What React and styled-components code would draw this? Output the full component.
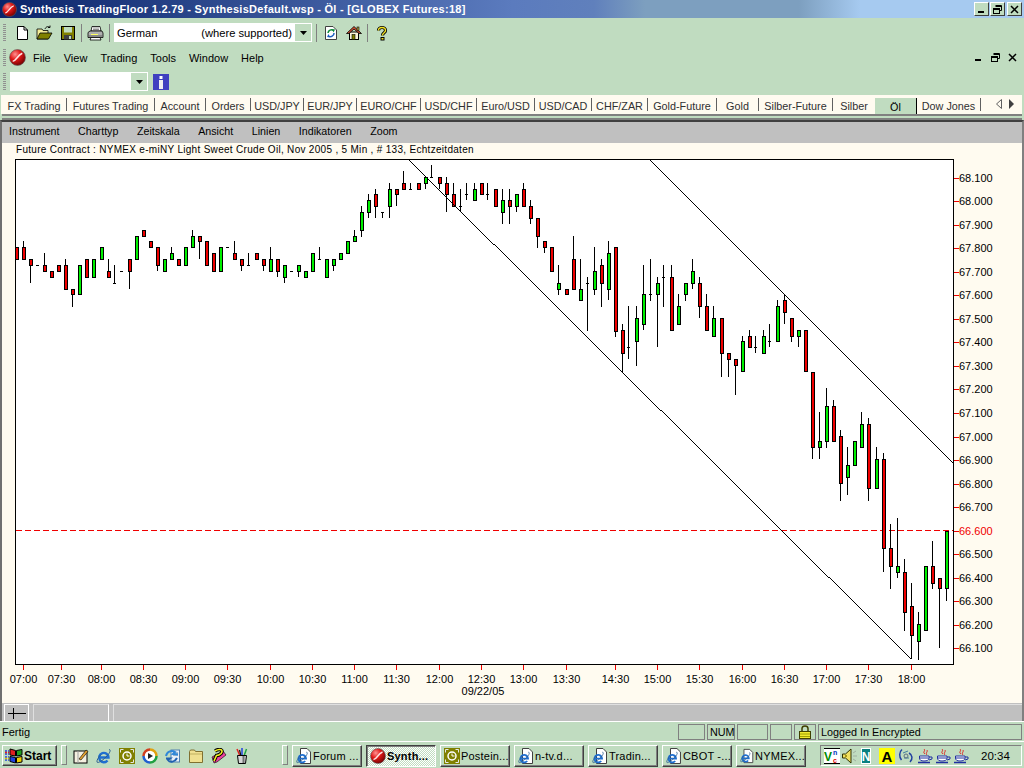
import React from "react";
import styled, { createGlobalStyle } from "styled-components";

const GREEN = "#c0dcc0";
const CREAM = "#fffbf0";
const GRAY = "#c0c0c0";

const TABS = [
  { label: "FX Trading", w: 65 },
  { label: "Futures Trading", w: 88 },
  { label: "Account", w: 51 },
  { label: "Orders", w: 45 },
  { label: "USD/JPY", w: 53 },
  { label: "EUR/JPY", w: 53 },
  { label: "EURO/CHF", w: 64 },
  { label: "USD/CHF", w: 56 },
  { label: "Euro/USD", w: 58 },
  { label: "USD/CAD", w: 57 },
  { label: "CHF/ZAR", w: 56 },
  { label: "Gold-Future", w: 69 },
  { label: "Gold", w: 42 },
  { label: "Silber-Future", w: 74 },
  { label: "Silber", w: 42, plain: true },
  { label: "Öl", w: 42, active: true },
  { label: "Dow Jones", w: 64 },
];

const Y_LABELS = [
  ["68.100", 178], ["68.000", 201], ["67.900", 225], ["67.800", 248], ["67.700", 272],
  ["67.600", 295], ["67.500", 319], ["67.400", 342], ["67.300", 366], ["67.200", 389],
  ["67.100", 413], ["67.000", 437], ["66.900", 460], ["66.800", 484], ["66.700", 507],
  ["66.600", 531], ["66.500", 554], ["66.400", 578], ["66.300", 601], ["66.200", 625],
  ["66.100", 648],
];

const X_LABELS = [
  ["07:00", 23], ["07:30", 61], ["08:00", 101], ["08:30", 143], ["09:00", 185], ["09:30", 227],
  ["10:00", 270], ["10:30", 312], ["11:00", 354], ["11:30", 396], ["12:00", 439], ["12:30", 481],
  ["13:00", 523], ["13:30", 566], ["14:30", 615], ["15:00", 657], ["15:30", 699], ["16:00", 742],
  ["16:30", 784], ["17:00", 826], ["17:30", 868], ["18:00", 911],
];

// candles read off the zoomed reference: [kind, x, bodyTop, bodyBottom, wickTop, wickBottom]
const seg = (ox, oy, rows) =>
  rows.map(([kind, x, top, bottom, wickTop, wickBottom]) => ({
    kind,
    x: Math.round(ox + x / 3),
    top: Math.round(oy + top / 3),
    bottom: Math.round(oy + bottom / 3),
    wickTop: Math.round(oy + (wickTop ?? top) / 3),
    wickBottom: Math.round(oy + (wickBottom ?? bottom) / 3),
  }));

const CANDLES = [
  ...seg(0, 160, [
    ["r", 51, 262, 298], ["r", 72, 262, 298, 243], ["r", 93, 298, 316, 298, 370], ["d", 113, 316, 316],
    ["r", 134, 316, 334, 280], ["r", 156, 334, 352], ["r", 177, 316, 334], ["r", 198, 316, 388, 298],
    ["r", 219, 388, 403, 388, 440], ["g", 240, 316, 403], ["r", 261, 298, 352], ["g", 282, 298, 352],
    ["g", 306, 262, 298], ["r", 327, 334, 352, 298], ["d", 346, 370, 370, 316], ["d", 367, 334, 334],
    ["r", 390, 298, 334, 298, 388], ["g", 411, 229, 298], ["r", 432, 211, 229], ["r", 453, 244, 262],
    ["r", 474, 262, 316, 262, 334], ["g", 495, 298, 334], ["g", 516, 280, 298, 262], ["r", 537, 298, 316],
    ["g", 558, 262, 316], ["g", 579, 229, 262, 211], ["r", 600, 229, 244, 229, 298], ["r", 621, 244, 316],
    ["r", 642, 280, 334], ["g", 663, 262, 334], ["d", 684, 262, 262], ["r", 705, 280, 298, 243],
    ["r", 726, 298, 316, 298, 334], ["d", 746, 316, 316, 280], ["r", 771, 280, 298],
    ["r", 792, 298, 316, 298, 334], ["g", 813, 298, 334, 262], ["r", 834, 298, 334, 298, 352],
    ["g", 855, 316, 352, 316, 370], ["d", 875, 334, 334], ["g", 897, 316, 334, 316, 352], ["g", 918, 334, 352],
    ["g", 939, 280, 334], ["d", 960, 298, 298, 262], ["g", 981, 298, 352], ["g", 1002, 298, 316, 298, 334],
  ]),
  ...seg(340, 160, [
    ["g", 2, 280, 298], ["g", 23, 244, 280], ["g", 44, 229, 244, 211], ["g", 65, 157, 211, 139, 230],
    ["g", 87, 121, 157, 102, 175], ["r", 108, 103, 139, 87, 175], ["d", 128, 157, 157, 157, 175],
    ["g", 149, 88, 139, 70, 175], ["r", 171, 88, 103, 88, 139], ["r", 192, 70, 88, 34], ["d", 214, 88, 88, 70],
    ["r", 236, 70, 88], ["g", 258, 52, 70, 52, 88], ["d", 277, 52, 52, 16], ["r", 300, 52, 70, 52, 88],
    ["r", 320, 70, 103, 52, 157], ["r", 341, 103, 139, 70], ["d", 362, 139, 139, 88, 157],
    ["d", 382, 103, 103, 70, 121], ["g", 404, 88, 121, 70], ["r", 426, 70, 103], ["d", 445, 103, 103, 70, 121],
    ["r", 468, 88, 139], ["g", 489, 121, 157, 88, 193], ["r", 510, 121, 139, 88, 193],
    ["g", 531, 103, 139, 103, 157], ["r", 552, 88, 139, 70], ["r", 573, 139, 175, 121, 193],
    ["r", 594, 175, 229, 175, 263], ["r", 615, 244, 262, 244, 280], ["r", 636, 262, 334],
    ["g", 657, 370, 388, 316, 404], ["r", 681, 388, 403], ["r", 702, 298, 388, 229],
    ["g", 723, 388, 421, 298], ["d", 744, 370, 370, 352, 512], ["g", 765, 334, 388, 262, 404],
    ["r", 786, 316, 370, 298, 440], ["g", 807, 280, 388, 244, 421], ["r", 828, 262, 512, 262, 530],
  ]),
  ...seg(600, 230, [
    ["r", 69, 301, 370, 282, 428], ["d", 88, 352, 352, 229, 388], ["g", 110, 265, 334, 229, 407],
    ["g", 131, 193, 283, 106, 301], ["d", 152, 193, 193, 88, 212], ["g", 174, 160, 193, 142, 352],
    ["d", 193, 142, 142, 106, 230], ["r", 216, 142, 301, 106], ["g", 237, 229, 283, 193],
    ["g", 258, 160, 193, 160, 212], ["g", 279, 124, 160, 88, 178], ["r", 300, 160, 229, 142, 265],
    ["r", 321, 229, 301, 193], ["g", 342, 265, 319, 229], ["r", 366, 265, 370, 265, 442],
    ["r", 387, 370, 388, 370, 442], ["r", 408, 388, 406, 388, 494], ["g", 429, 334, 424, 319],
    ["r", 450, 319, 352, 301], ["d", 469, 352, 352, 319, 370], ["g", 492, 319, 370, 301],
    ["d", 511, 334, 334, 283, 352], ["g", 534, 229, 334, 211], ["r", 555, 211, 247, 193, 283],
    ["r", 576, 265, 319, 265, 335], ["g", 597, 301, 319, 301, 352], ["r", 618, 301, 424],
  ]),
  ...seg(800, 320, [
    ["r", 39, 155, 382, 155, 418], ["g", 59, 364, 382, 277, 418], ["g", 80, 259, 364, 205, 383],
    ["r", 101, 259, 364, 241], ["r", 122, 349, 490, 331, 542], ["g", 143, 436, 472, 382, 524],
    ["g", 164, 364, 436], ["g", 185, 313, 382, 277], ["r", 206, 313, 505, 295, 542], ["g", 230, 418, 505, 382],
  ]),
  ...seg(860, 500, [
    ["r", 71, -122, 143, -140, 215], ["r", 92, 143, 197, 72, 266], ["g", 113, 197, 215, 54, 233],
    ["r", 134, 215, 337, 178, 392], ["r", 155, 319, 406, 250, 478], ["g", 176, 373, 424, 337, 480],
    ["g", 197, 197, 391], ["r", 218, 197, 250, 124, 266], ["r", 239, 233, 265, 233, 443],
    ["g", 260, 92, 265, 92, 302],
  ]),
];

const Svg = ({ size = 16, children }) => (
  <svg width={size} height={size} viewBox="0 0 16 16">
    {children}
  </svg>
);

const LogoBall = ({ size = 16 }) => (
  <Svg size={size}>
    <defs>
      <radialGradient id="ball" cx="35%" cy="30%" r="75%">
        <stop offset="0" stopColor="#ff9090" />
        <stop offset="0.45" stopColor="#e01818" />
        <stop offset="1" stopColor="#700000" />
      </radialGradient>
    </defs>
    <circle cx="8" cy="8" r="7.5" fill="url(#ball)" stroke="#606060" strokeWidth="0.6" />
    <path d="M3.5 11.5C7 11.5 7.5 6 12.5 4" fill="none" stroke="#ffe4e4" strokeWidth="1.4" />
  </Svg>
);

const NewIcon = () => (
  <Svg>
    <path d="M3.5 1.5H10L13.5 5V14.5H3.5Z" fill="#fff" stroke="#000" />
    <path d="M10 1.5V5H13.5" fill="none" stroke="#000" />
  </Svg>
);

const OpenIcon = () => (
  <svg width="17" height="16" viewBox="0 0 17 16">
    <path d="M1 4H6L7 5.5H12V14H1Z" fill="#f4ec98" stroke="#000" strokeWidth="0.8" />
    <path d="M1 14L4 8H16L12.5 14Z" fill="#808000" stroke="#000" strokeWidth="0.8" />
    <path d="M9 4C10 1.5 12 1 14 2.5M14 2.5V0.5M14 2.5H12" fill="none" stroke="#000" strokeWidth="0.9" />
  </svg>
);

const SaveIcon = () => (
  <Svg>
    <rect x="1.5" y="1.5" width="13" height="13" fill="#808000" stroke="#000" />
    <rect x="4" y="2" width="8" height="5.5" fill={GREEN} />
    <rect x="4" y="10" width="8" height="4.5" fill="#404040" />
    <rect x="9" y="11" width="2" height="3" fill={GREEN} />
  </Svg>
);

const PrintIcon = () => (
  <svg width="17" height="16" viewBox="0 0 17 16">
    <path d="M5 1.5H13L14 6H4Z" fill="#fff" stroke="#000" strokeWidth="0.8" />
    <path d="M6 3H12M6 4.5H12" stroke="#606060" strokeWidth="0.7" />
    <path d="M1 7.5L3 6H15L16 8V12.5H1Z" fill="#b0b0b0" stroke="#000" strokeWidth="0.8" />
    <path d="M4 9.5H11" stroke="#ffff60" />
    <path d="M1 11H16" stroke="#606060" />
    <path d="M4 12.5H13L14 15H3Z" fill="#fff" stroke="#000" strokeWidth="0.8" />
  </svg>
);

const RefreshIcon = () => (
  <Svg>
    <path d="M2.5 1.5H10L13.5 5V14.5H2.5Z" fill="#fff" stroke="#404040" />
    <path d="M5 8A3.5 3.5 0 0 1 10.5 5.5" fill="none" stroke="#0a8a3a" strokeWidth="1.5" />
    <path d="M11 8A3.5 3.5 0 0 1 5.5 11" fill="none" stroke="#1c5fc0" strokeWidth="1.5" />
    <path d="M9 4L12 4.5L10.5 7.5Z" fill="#0a8a3a" />
    <path d="M7 12.5L4 12L5.5 9Z" fill="#1c5fc0" />
  </Svg>
);

const HomeIcon = () => (
  <Svg>
    <rect x="3.5" y="7" width="9" height="7.5" fill="#fbf6d8" stroke="#000" />
    <path d="M0.5 8.5L8 1.5L15.5 8.5L13 8.5L8 4L3 8.5Z" fill="#d05030" stroke="#000" strokeWidth="0.8" />
    <rect x="11" y="2" width="2" height="3.5" fill="#b0a040" stroke="#000" strokeWidth="0.6" />
    <rect x="6" y="9.5" width="3" height="5" fill="#808000" stroke="#000" strokeWidth="0.6" />
  </Svg>
);

const HelpIcon = () => (
  <Svg>
    <path d="M4.5 5.5C4.5 1.5 11.5 1.5 11.5 5.5C11.5 8 8.5 7.5 8.5 10.5" fill="none" stroke="#000" strokeWidth="3.2" />
    <rect x="6.5" y="12" width="4" height="3.5" fill="#000" />
    <path d="M4.5 5.5C4.5 1.5 11.5 1.5 11.5 5.5C11.5 8 8.5 7.5 8.5 10.5" fill="none" stroke="#f0e020" strokeWidth="1.4" />
    <rect x="7.5" y="13" width="2" height="1.5" fill="#f0e020" />
  </Svg>
);

const InfoIcon = () => (
  <Svg>
    <rect width="16" height="16" fill="#4040c0" />
    <rect x="6.5" y="2" width="3" height="3" fill="#fff" />
    <rect x="6" y="6" width="4" height="9" fill="#f0f0f0" />
  </Svg>
);

const MinGlyph = () => (
  <svg width="9" height="9" viewBox="0 0 9 9">
    <rect x="1" y="6" width="6" height="2" fill="#000" />
  </svg>
);

const RestoreGlyph = () => (
  <svg width="9" height="9" viewBox="0 0 9 9">
    <path d="M2.5 0.5H8.5V5.5H6.5" fill="none" stroke="#000" />
    <path d="M2.5 1.5H8.5" stroke="#000" />
    <rect x="0.5" y="3.5" width="6" height="5" fill="none" stroke="#000" />
    <path d="M0.5 4.5H6.5" stroke="#000" />
  </svg>
);

const CloseGlyph = () => (
  <svg width="9" height="9" viewBox="0 0 9 9">
    <path d="M1 1L8 8M8 1L1 8" stroke="#000" strokeWidth="1.5" />
  </svg>
);

const ArrowDown = () => (
  <svg width="7" height="4" viewBox="0 0 7 4">
    <path d="M0 0H7L3.5 4Z" fill="#000" />
  </svg>
);

const ScrollArrows = () => (
  <svg width="20" height="10" viewBox="0 0 20 10">
    <path d="M5.5 0.5V9.5L0.5 5Z" fill="none" stroke="#606060" />
    <path d="M13 0V10L18 5Z" fill="#404040" />
  </svg>
);

const WinFlag = () => (
  <svg width="19" height="16" viewBox="0 0 19 16">
    <path d="M6 1L11.5 2.5V8L6 7Z" fill="#e02020" stroke="#000" />
    <path d="M12.5 2.5L18 1.5V7L12.5 8Z" fill="#20a020" stroke="#000" />
    <path d="M6 8.5L11.5 9.5V15L6 13.5Z" fill="#2040e0" stroke="#000" />
    <path d="M12.5 9.5L18 8.5V14L12.5 15Z" fill="#f0d000" stroke="#000" />
    <path d="M1 3H5M1 6H5M1 9H5M1 12H5" stroke="#2040e0" strokeWidth="1.5" strokeDasharray="2 1" />
    <path d="M1 4.5H5" stroke="#e02020" strokeWidth="1.5" strokeDasharray="2 1" />
    <path d="M1 10.5H5" stroke="#e0c000" strokeWidth="1.5" strokeDasharray="2 1" />
  </svg>
);

const IeIcon = () => (
  <Svg>
    <path d="M3.5 9.5H12.5A4.7 4.7 0 1 0 11.5 12.5" fill="none" stroke="#1f6fd0" strokeWidth="2.4" />
    <path d="M13 1.5C15 1.5 14.5 4.5 10 9C5.5 13.5 1.5 15.5 1 14C0.5 12.5 2.5 9 5 6.5" fill="none" stroke="#2c5f90" strokeWidth="1" />
  </Svg>
);

const DocIe = () => (
  <Svg>
    <path d="M4.5 0.5H11L14.5 4V15.5H4.5Z" fill="#fff" stroke="#404040" />
    <g transform="translate(0 3) scale(0.8)">
      <IeIcon />
    </g>
  </Svg>
);

const OliveClock = () => (
  <Svg>
    <rect width="16" height="16" fill="#808000" />
    <circle cx="8" cy="8" r="4" fill="none" stroke="#fff" strokeWidth="1.5" />
    <path d="M8 5.5V8H10.5" fill="none" stroke="#fff" />
    <path d="M1.5 4.5V1.5H4.5M11.5 1.5H14.5V4.5M14.5 11.5V14.5H11.5M4.5 14.5H1.5V11.5" fill="none" stroke="#e8e8e8" />
  </Svg>
);

const ShowDesktop = () => (
  <Svg>
    <rect x="1" y="3" width="13" height="12" fill="#f4f0e0" stroke="#000" />
    <path d="M5 3L5 15" stroke="#a0a0a0" />
    <path d="M6 11L13 2L15 3.5L8 12Z" fill="#e0a030" stroke="#000" strokeWidth="0.6" />
  </Svg>
);

const MediaIcon = () => (
  <Svg>
    <circle cx="8" cy="8" r="6" fill="#fff" />
    <path d="M8 1.5A6.5 6.5 0 0 1 14.5 8" fill="none" stroke="#e0a010" strokeWidth="2.5" />
    <path d="M14.5 8A6.5 6.5 0 0 1 8 14.5" fill="none" stroke="#20a040" strokeWidth="2.5" />
    <path d="M8 14.5A6.5 6.5 0 0 1 1.5 8" fill="none" stroke="#2060d0" strokeWidth="2.5" />
    <path d="M1.5 8A6.5 6.5 0 0 1 8 1.5" fill="none" stroke="#d04020" strokeWidth="2.5" />
    <path d="M6 5V11L11 8Z" fill="#202020" />
  </Svg>
);

const MailIcon = () => (
  <Svg>
    <rect x="6" y="2" width="8.5" height="12" fill="#e8f0f8" stroke="#5080b0" />
    <path d="M8 5H13M8 7H13" stroke="#5080b0" />
    <path d="M1 8C2 3 7 2 10 4L8 6L13 6.5" fill="none" stroke="#3088d8" strokeWidth="2" />
    <path d="M12 10C10 14 5 15 3 12L5 10.5H1" fill="none" stroke="#2060b0" strokeWidth="2" />
  </Svg>
);

const FolderIcon = () => (
  <Svg>
    <path d="M1.5 3.5L2.5 2H6.5L7.5 3.5H14.5V14.5H1.5Z" fill="#f0e090" stroke="#807030" />
    <path d="M2 6H14" stroke="#c0b060" />
  </Svg>
);

const PaintIcon = () => (
  <Svg>
    <path d="M1 9L12 3L15 7L6 14L3 15Z" fill="#f040a0" stroke="#000" strokeWidth="0.6" />
    <path d="M4 3C9 0 13 2 10 5.5C8.5 7 6.5 7.5 5.5 7.5L3 13" fill="none" stroke="#000" strokeWidth="3.5" />
    <path d="M4 3C9 0 13 2 10 5.5C8.5 7 6.5 7.5 5.5 7.5L3 13" fill="none" stroke="#f8f020" strokeWidth="1.6" />
  </Svg>
);

const PencilCup = () => (
  <Svg>
    <path d="M3 1L6 8" stroke="#e02020" strokeWidth="1.5" />
    <path d="M8 0V8" stroke="#2040e0" strokeWidth="1.5" />
    <path d="M12.5 1L10 8" stroke="#20a040" strokeWidth="1.5" />
    <path d="M5.5 2L7 8" stroke="#101010" strokeWidth="1.2" />
    <path d="M3.5 7.5H12.5L11.5 15.5H4.5Z" fill="#d8d8d8" stroke="#000" />
    <path d="M9.5 8V15" stroke="#707070" strokeWidth="2" />
  </Svg>
);

const LockIcon = () => (
  <Svg>
    <path d="M5 7.5V4.5C5 1 11 1 11 4.5V7.5" fill="none" stroke="#404000" strokeWidth="1.5" />
    <rect x="2.5" y="7.5" width="11" height="7" fill="#f0e830" stroke="#404000" />
    <path d="M3 10H13M3 12.5H13" stroke="#a0a000" />
  </Svg>
);

const VncIcon = () => (
  <Svg>
    <rect width="16" height="16" fill="#fff" />
    <rect y="15" width="16" height="1" fill="#000" />
    <rect width="16" height="1" fill="#000" />
    <VncLetter x="0" y="13" fontSize="12" fill="#008a00">V</VncLetter>
    <VncLetter x="9" y="6.5" fontSize="7" fill="#0030c0">n</VncLetter>
    <VncLetter x="9" y="14.5" fontSize="7" fill="#e00000">c</VncLetter>
  </Svg>
);

const SpeakerIcon = () => (
  <Svg>
    <path d="M0.5 6H3.5L9 1V15L3.5 10H0.5Z" fill="#f0e060" stroke="#303000" />
    <path d="M4 7V9" stroke="#908000" strokeWidth="1.5" />
    <path d="M11 5L14 3M11 8H15M11 11L14 13" stroke="#a0b0a0" />
  </Svg>
);

const NIcon = () => (
  <svg width="10" height="16" viewBox="0 0 10 16">
    <rect width="10" height="16" fill="#fff" />
    <rect x="1" y="1" width="8" height="14" fill="#0a8080" />
    <VncLetter x="5" y="13" textAnchor="middle" fontSize="12" fill="#fff">N</VncLetter>
  </svg>
);

const AIcon = () => (
  <Svg>
    <rect width="16" height="16" fill="#ffff00" />
    <VncLetter x="8" y="14" textAnchor="middle" fontSize="15" fill="#000">A</VncLetter>
  </Svg>
);

const NetIcon = () => (
  <Svg>
    <path d="M4 1.5C1 4 1 9 3.5 12" fill="none" stroke="#2040a0" strokeWidth="1.5" />
    <path d="M11 5C14.5 7 15 11 12 14" fill="none" stroke="#2040a0" strokeWidth="1.5" />
    <path d="M5 5L10 3M6 10H11" stroke="#4080a0" />
    <circle cx="8" cy="8" r="2" fill="none" stroke="#607080" />
  </Svg>
);

const JavaIcon = () => (
  <Svg>
    <path d="M7 1C9 3 5 4 8 6M10 2C11 4 8 5 10 7" fill="none" stroke="#e02020" />
    <path d="M2.5 8H12V10C12 12 10 13 7 13C4 13 2.5 12 2.5 10Z" fill="#fff" stroke="#2030a0" />
    <path d="M3 10H11.5" stroke="#2030a0" />
    <path d="M12 9H15V11L12 12" fill="none" stroke="#2030a0" />
    <path d="M1 14.5H13" stroke="#2030a0" strokeWidth="1.5" />
  </Svg>
);

const QUICK = [ShowDesktop, IeIcon, OliveClock, MediaIcon, MailIcon, FolderIcon, PaintIcon, PencilCup];

const TASKS = [
  { label: "Forum ...", Icon: DocIe },
  { label: "Synth...", Icon: LogoBall, active: true },
  { label: "Postein...", Icon: OliveClock },
  { label: "n-tv.d...", Icon: DocIe },
  { label: "Tradin...", Icon: DocIe },
  { label: "CBOT -...", Icon: DocIe },
  { label: "NYMEX...", Icon: DocIe },
];

const Chart = () => (
  <PlotSvg viewBox="2 157 1020 545" width="1020" height="545">
    <rect x="15.5" y="159.5" width="938" height="505" fill="#fff" stroke="#000" />
    {Y_LABELS.map(([label, y]) => (
      <g key={label}>
        <rect x="954" y={y} width="5" height="1" fill="#f00000" />
        <AxisText x="959" y={y + 4} fill={label === "66.600" ? "#f00000" : "#000"}>
          {label}
        </AxisText>
      </g>
    ))}
    {X_LABELS.map(([label, x]) => (
      <g key={label}>
        <rect x={x} y="665" width="1" height="5" fill="#f00000" />
        <AxisText x={x + 0.5} y="683" textAnchor="middle" fill="#000">
          {label}
        </AxisText>
      </g>
    ))}
    <AxisText x="483" y="695" textAnchor="middle" fill="#000">
      09/22/05
    </AxisText>
    <line x1="16" y1="530.5" x2="953" y2="530.5" stroke="#f00000" strokeDasharray="6 3" />
    <g shapeRendering="crispEdges">
      {CANDLES.map((c, i) => (
        <g key={i}>
          <rect x={c.x - 1} y={c.wickTop} width="1" height={Math.max(c.wickBottom - c.wickTop, 1)} fill="#000" />
          {c.kind === "d" ? (
            <rect x={c.x - 2} y={c.top} width="3" height="1" fill="#000" />
          ) : (
            <rect
              x={c.x - 1.5}
              y={c.top + 0.5}
              width="3"
              height={c.bottom - c.top}
              fill={c.kind === "r" ? "#f00000" : "#00f000"}
              stroke="#000"
            />
          )}
        </g>
      ))}
      <path d="M409 160L493 244H494L660 410H661L828 577H829L911 659" fill="none" stroke="#000" />
      <path d="M650 160L953 463" fill="none" stroke="#000" />
    </g>
  </PlotSvg>
);

const App = () => (
  <>
    <GlobalStyle />
    <Page>
      <TitleBar>
        <TitleLogo>
          <LogoBall size={15} />
        </TitleLogo>
        <TitleText>Synthesis TradingFloor 1.2.79 - SynthesisDefault.wsp - Öl - [GLOBEX Futures:18]</TitleText>
        <WinButtons>
          <WinButton><MinGlyph /></WinButton>
          <WinButton><RestoreGlyph /></WinButton>
          <WinButton $gap><CloseGlyph /></WinButton>
        </WinButtons>
      </TitleBar>

      <Toolbar $h={27} $pt={2}>
        <Grip />
        <Slot $first><NewIcon /></Slot>
        <Slot><OpenIcon /></Slot>
        <Slot><SaveIcon /></Slot>
        <ToolSep />
        <Slot><PrintIcon /></Slot>
        <ToolSep />
        <Combo $w={198} $left={2}>
          <ComboValue>
            <span>German</span>
            <span>(where supported)</span>
          </ComboValue>
          <ComboButton><ArrowDown /></ComboButton>
        </Combo>
        <ToolSep $wide />
        <Slot><RefreshIcon /></Slot>
        <Slot><HomeIcon /></Slot>
        <ToolSep />
        <Slot><HelpIcon /></Slot>
      </Toolbar>

      <Toolbar $h={23} $pt={2}>
        <Grip />
        <MenuLogo>
          <LogoBall size={17} />
        </MenuLogo>
        <MainMenu>
          <span>File</span>
          <span>View</span>
          <span>Trading</span>
          <span>Tools</span>
          <span>Window</span>
          <span>Help</span>
        </MainMenu>
        <MdiButtons>
          <MinGlyph />
          <RestoreGlyph />
          <CloseGlyph />
        </MdiButtons>
      </Toolbar>

      <Toolbar $h={27}>
        <Grip />
        <Combo $w={138} $left={4}>
          <ComboValue />
          <ComboButton><ArrowDown /></ComboButton>
        </Combo>
        <InfoSlot><InfoIcon /></InfoSlot>
      </Toolbar>

      <TabBar>
        {TABS.map(tab => (
          <Tab key={tab.label} $w={tab.w} $active={tab.active} $plain={tab.plain}>
            {tab.label}
          </Tab>
        ))}
        <TabArrows><ScrollArrows /></TabArrows>
      </TabBar>
      <TabRule />

      <ChartWindow>
        <ChartMenu>
          <span>Instrument</span>
          <span>Charttyp</span>
          <span>Zeitskala</span>
          <span>Ansicht</span>
          <span>Linien</span>
          <span>Indikatoren</span>
          <span>Zoom</span>
        </ChartMenu>
        <ChartTitle>Future Contract : NYMEX e-miNY Light Sweet Crude Oil, Nov 2005 , 5 Min , # 133, Echtzeitdaten</ChartTitle>
        <Chart />
        <ScrollRow>
          <SplitButton>
            <svg width="18" height="11" viewBox="0 0 18 11">
              <path d="M0 5.5H18M5.5 0V11" stroke="#000" />
            </svg>
          </SplitButton>
          <ScrollPane $w={76} />
          <ScrollPane $grow />
        </ScrollRow>
      </ChartWindow>

      <StatusBar>
        <StatusText>Fertig</StatusText>
        <Panel $w={27} />
        <Panel $w={28}>NUM</Panel>
        <Panel $w={31} />
        <Panel $w={22} />
        <Panel $w={22} $center><LockIcon /></Panel>
        <Panel $w={204}>Logged In Encrypted</Panel>
      </StatusBar>

      <Taskbar>
        <StartButton>
          <WinFlag />
          Start
        </StartButton>
        <BarHandle />
        <QuickLaunch>
          {QUICK.map((Icon, i) => (
            <QuickSlot key={i}><Icon /></QuickSlot>
          ))}
        </QuickLaunch>
        <BarHandle />
        <TaskList>
          {TASKS.map(task => (
            <TaskButton key={task.label} $active={task.active}>
              <task.Icon />
              <span>{task.label}</span>
            </TaskButton>
          ))}
        </TaskList>
        <Tray>
          <TrayIcon><VncIcon /></TrayIcon>
          <TrayIcon><SpeakerIcon /></TrayIcon>
          <TrayIcon $ml={1}><NIcon /></TrayIcon>
          <TrayIcon $ml={6}><AIcon /></TrayIcon>
          <TrayIcon $ml={1}><NetIcon /></TrayIcon>
          <TrayIcon $ml={1}><JavaIcon /></TrayIcon>
          <TrayIcon><JavaIcon /></TrayIcon>
          <TrayIcon><JavaIcon /></TrayIcon>
          <Clock>20:34</Clock>
        </Tray>
      </Taskbar>
    </Page>
  </>
);

export default App;

const GlobalStyle = createGlobalStyle`
  html, body {
    margin: 0;
    padding: 0;
    background: ${GREEN};
  }

  * {
    box-sizing: border-box;
  }
`;

const Page = styled.div`
  width: 1024px;
  height: 768px;
  overflow: hidden;
  background: ${GREEN};
  font-family: "Liberation Sans", Arial, sans-serif;
  font-size: 11px;
  color: #000;
  display: flex;
  flex-direction: column;
`;

const TitleBar = styled.div`
  height: 18px;
  display: flex;
  align-items: center;
  padding-right: 2px;
  background: linear-gradient(
    90deg,
    #0a246a 0%,
    #5b7bbe 50%,
    #6080bc 58%,
    #7d9fbf 63%,
    #7d9fbf 78%,
    #a6caf0 84%,
    #a6caf0 100%
  );
`;

const TitleLogo = styled.div`
  width: 20px;
  padding-left: 2px;
  display: flex;
`;

const TitleText = styled.div`
  flex: 1;
  color: #fff;
  font-weight: 700;
  font-size: 11px;
  letter-spacing: 0.28px;
  white-space: nowrap;
`;

const WinButtons = styled.div`
  display: flex;
`;

const WinButton = styled.div`
  width: 15px;
  height: 14px;
  margin-left: ${props => (props.$gap ? "2px" : "1px")};
  display: flex;
  align-items: center;
  justify-content: center;
  background: ${GREEN};
  border: 1px solid;
  border-color: #fff #404040 #404040 #fff;
`;

const Toolbar = styled.div`
  height: ${props => props.$h}px;
  display: flex;
  align-items: center;
  padding-left: 3px;
  padding-top: ${props => props.$pt || 0}px;
`;

const Grip = styled.div`
  width: 3px;
  height: 17px;
  background: repeating-linear-gradient(180deg, #909090 0 1px, transparent 1px 2px);
  flex: none;
`;

const Slot = styled.div`
  width: 23px;
  height: 22px;
  flex: none;
  margin-left: ${props => (props.$first ? "4px" : "0")};
  display: flex;
  align-items: center;
  justify-content: center;
`;

const ToolSep = styled.div`
  width: 1px;
  height: 18px;
  flex: none;
  margin: 0 2px;
  margin-left: ${props => (props.$wide ? "4px" : "2px")};
  background: #808080;
`;

const Combo = styled.div`
  width: ${props => props.$w}px;
  height: 19px;
  margin-left: ${props => props.$left}px;
  flex: none;
  display: flex;
  background: #fff;
  border: 1px solid #fff;
`;

const ComboValue = styled.div`
  flex: 1;
  display: flex;
  justify-content: space-between;
  align-items: center;
  padding: 0 3px 0 2px;
  font-size: 11.2px;
`;

const ComboButton = styled.div`
  width: 16px;
  display: flex;
  align-items: center;
  justify-content: center;
  background: ${GREEN};
`;

const MenuLogo = styled.div`
  width: 24px;
  padding-left: 3px;
  display: flex;
  flex: none;
`;

const MainMenu = styled.div`
  display: flex;
  flex: 1;
  gap: 13px;
  margin-left: 3px;
  font-size: 11px;
`;

const MdiButtons = styled.div`
  display: flex;
  gap: 8px;
  margin-right: 7px;
`;

const InfoSlot = styled.div`
  display: flex;
  margin-left: 5px;
`;

const TabBar = styled.div`
  height: 19px;
  margin: 0 2px 0 1px;
  padding-left: 1px;
  display: flex;
  align-items: center;
  background: ${CREAM};
`;

const Tab = styled.div`
  width: ${props => props.$w}px;
  height: ${props => (props.$active ? "16px" : "13px")};
  flex: none;
  align-self: ${props => (props.$active ? "flex-end" : "center")};
  display: flex;
  align-items: center;
  justify-content: center;
  padding-top: 2px;
  color: ${props => (props.$active ? "#000" : "#303030")};
  background: ${props => (props.$active ? GREEN : "transparent")};
  border-right: ${props => {
    if (props.$plain) return "none";
    return props.$active ? "1px solid #000" : "1px solid #606060";
  }};
  font-size: 10.8px;
  white-space: nowrap;
`;

const TabArrows = styled.div`
  margin: -2px 0 0 15px;
  display: flex;
`;

const TabRule = styled.div`
  height: 6px;
  margin: 0 2px;
  border-top: 2px solid transparent;
  background: linear-gradient(${GREEN} 0 2px, #808080 2px 4px, ${GREEN} 4px);
`;

const ChartWindow = styled.div`
  height: 601px;
  flex: none;
  display: flex;
  flex-direction: column;
  border-top: 2px solid #404040;
  border-left: 2px solid #707070;
  border-right: 2px solid #808080;
  background: ${CREAM};
`;

const ChartMenu = styled.div`
  height: 21px;
  flex: none;
  padding: 0 0 3px 7px;
  display: flex;
  align-items: center;
  gap: 18.5px;
  background: ${GRAY};
  font-size: 10.7px;
`;

const ChartTitle = styled.div`
  height: 14px;
  flex: none;
  padding: 0 0 2px 14px;
  display: flex;
  align-items: center;
  font-size: 10px;
  letter-spacing: 0.3px;
  white-space: nowrap;
`;

const PlotSvg = styled.svg`
  display: block;
  flex: none;
`;

const AxisText = styled.text`
  font-family: "Liberation Sans", Arial, sans-serif;
  font-size: 11px;
`;

const VncLetter = styled.text`
  font-family: "Liberation Sans", Arial, sans-serif;
  font-weight: 700;
`;

const ScrollRow = styled.div`
  height: 18px;
  flex: none;
  margin-top: 1px;
  padding: 1px 0 0 2px;
  display: flex;
  background: ${GRAY};
`;

const SplitButton = styled.div`
  width: 25px;
  display: flex;
  align-items: center;
  justify-content: center;
  border: 1px solid #fff;
  border-bottom: none;
`;

const ScrollPane = styled.div`
  width: ${props => (props.$grow ? "auto" : `${props.$w}px`)};
  flex: ${props => (props.$grow ? 1 : "none")};
  margin-left: 4px;
  border-left: 1px solid #e0e0e0;
  border-top: 1px solid #e0e0e0;
  border-right: ${props => (props.$grow ? "none" : "1px solid #fff")};
`;

const StatusBar = styled.div`
  height: 20px;
  flex: none;
  padding-top: 2px;
  padding-right: 2px;
  display: flex;
  gap: 2px;
  align-items: flex-start;
  border-top: 1px solid #fff;
`;

const StatusText = styled.div`
  flex: 1;
  padding: 2px 0 0 2px;
  font-size: 11px;
`;

const Panel = styled.div`
  width: ${props => props.$w}px;
  height: 16px;
  flex: none;
  display: flex;
  align-items: center;
  justify-content: ${props => (props.$center ? "center" : "flex-start")};
  padding-left: ${props => (props.$center ? "0" : "2px")};
  border: 1px solid #808080;
  font-size: 10.8px;
  white-space: nowrap;
`;

const Taskbar = styled.div`
  height: 27px;
  flex: none;
  padding: 3px 2px 0 2px;
  display: flex;
  align-items: flex-start;
  border-top: 1px solid #fff;
`;

const StartButton = styled.div`
  width: 55px;
  height: 21px;
  flex: none;
  padding-left: 1px;
  display: flex;
  align-items: center;
  gap: 1px;
  font-weight: 700;
  font-size: 12px;
  border: 1px solid;
  border-color: #fff #404040 #404040 #fff;
  box-shadow: inset -1px -1px 0 #808080;
`;

const BarHandle = styled.div`
  width: 6px;
  height: 20px;
  flex: none;
  margin-left: 4px;
  border: 1px solid;
  border-color: #fff #808080 #808080 #fff;
`;

const QuickLaunch = styled.div`
  width: 211px;
  flex: none;
  display: flex;
  padding-left: 2.5px;
`;

const QuickSlot = styled.div`
  width: 23px;
  height: 21px;
  flex: none;
  display: flex;
  align-items: center;
  justify-content: center;
`;

const TaskList = styled.div`
  display: flex;
  gap: 4px;
  margin-left: 4px;
`;

const TaskButton = styled.div`
  width: 70px;
  height: 22px;
  flex: none;
  padding-left: 3px;
  display: flex;
  align-items: center;
  gap: 1px;
  font-size: 11px;
  letter-spacing: 0.2px;
  font-weight: ${props => (props.$active ? 700 : 400)};
  white-space: nowrap;
  border: 1px solid;
  border-color: ${props => (props.$active ? "#404040 #fff #fff #404040" : "#fff #404040 #404040 #fff")};
  box-shadow: ${props => (props.$active ? "inset 1px 1px 0 #808080" : "inset -1px -1px 0 #808080")};
  background: ${props => (props.$active ? `repeating-conic-gradient(#fff 0 25%, ${GREEN} 0 50%) 0 0 / 2px 2px` : "transparent")};
`;

const Tray = styled.div`
  width: 202px;
  height: 21px;
  flex: none;
  margin-left: 14px;
  padding-left: 3px;
  display: flex;
  align-items: center;
  gap: 2px;
  border: 1px solid;
  border-color: #808080 #fff #fff #808080;
`;

const TrayIcon = styled.div`
  display: flex;
  flex: none;
  margin-left: ${props => props.$ml || 0}px;
`;

const Clock = styled.div`
  margin-left: 10px;
  font-size: 11.5px;
`;
